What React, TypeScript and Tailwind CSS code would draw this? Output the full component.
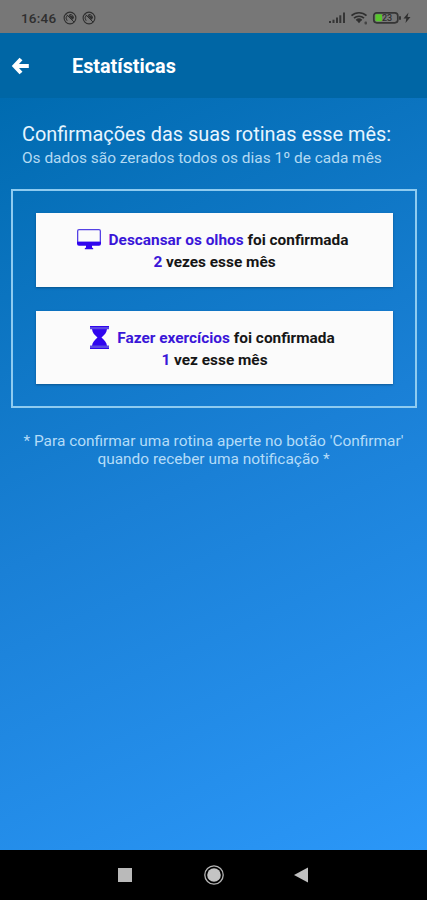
import type { ReactNode } from "react";

function MutedIcon() {
  return (
    <svg width="14" height="14" viewBox="0 0 14 14" fill="none" stroke="#2f2f2f">
      <circle cx="7" cy="7" r="5.900" strokeWidth="1.100" />
      <path d="M4.200 9.800a4 4 0 0 1 .2-5.600M6.500 3.500c2.500-.4 4.300 1.500 4 4" strokeWidth="1" />
      <path d="M6 4.500l3.500 3.800V5.500zM3.500 3.500l7.500 7.500" fill="#2f2f2f" strokeWidth="1" />
    </svg>
  );
}

function StatusBar() {
  return (
    <div className="flex h-[33px] shrink-0 items-start justify-between bg-[#777777] pt-[11px] pr-[15px] pl-[21px] text-[#2f2f2f]">
      <div className="flex items-center">
        <span className="w-[36px] text-[13.500px] leading-[14px] font-medium tracking-[0.2px]">16:46</span>
        <span className="ml-[6px]"><MutedIcon /></span>
        <span className="ml-[5px]"><MutedIcon /></span>
      </div>
      <svg width="83" height="14" viewBox="0 0 83 14" fill="none">
        <g fill="#353535">
          <rect x="0" y="10" width="2" height="2" />
          <rect x="3.500" y="8.700" width="2" height="3.300" />
          <rect x="7" y="6.500" width="2" height="5.500" />
          <rect x="10.300" y="4.300" width="2" height="7.700" />
          <rect x="14" y="1.500" width="2" height="10.500" />
        </g>
        <path d="M22.500 4.700a11 11 0 0 1 15 0M25 7.200a7.400 7.400 0 0 1 10 0M27.300 9.400a4 4 0 0 1 5.400 0" stroke="#2f2f2f" strokeWidth="1.700" />
        <path d="M27.700 9.500L30 12.200l2.300-2.700q-2.300-1.500-4.600 0z" fill="#2f2f2f" />
        <rect x="35.500" y="10.500" width="2.500" height="3" rx="1" fill="#444" />
        <rect x="44.800" y="1.800" width="24" height="10" rx="3" stroke="#353535" strokeWidth="1.700" />
        <rect x="46.500" y="3.300" width="6.500" height="7" rx="1" fill="#58c72d" />
        <rect x="70" y="5" width="2" height="4" rx="1" fill="#353535" />
        <text x="53" y="10.300" fill="#303030" fontSize="9" fontWeight="500">23</text>
        <path d="M79.500 1.500L74.500 7.500h2.800L76.500 12l5-6h-3z" fill="#2f2f2f" />
      </svg>
    </div>
  );
}

function Header() {
  return (
    <header className="flex h-[65px] shrink-0 items-center bg-[#0066a5] pl-[11px] text-white">
      <svg className="w-[18px]" height="18" viewBox="0 0 18 18" fill="none" stroke="white" strokeWidth="4">
        <path d="M10 2L3.500 9l6.500 7M4 9h13.800" />
      </svg>
      <h1 className="ml-[43px] pt-[2px] text-[19.800px] leading-6 font-bold">Estatísticas</h1>
    </header>
  );
}

function MonitorIcon() {
  return (
    <svg width="24" height="22" viewBox="0 0 24 22">
      <path fillRule="evenodd" fill="#5542e4" d="M2 0h20a2 2 0 0 1 2 2v12H0V2a2 2 0 0 1 2-2zm0 1.200q-.7 0-.7.700v10.800h21.400V1.900q0-.7-.7-.7z" />
      <path fill="#3005ee" d="M0 12.700h24v2a2 2 0 0 1-2 2h-7v1.800l1.200.7v1H7.800v-1l1.200-.7v-1.800H2a2 2 0 0 1-2-2z" />
    </svg>
  );
}

function HourglassIcon() {
  return (
    <svg width="19" height="23" viewBox="0 0 19 23" fill="#3005ee">
      <path d="M2 3h15c-.3 3.500-2.500 6-5.500 8.500C14.500 14 16.700 16.500 17 20H2c.3-3.500 2.500-6 5.500-8.500C4.500 9 2.300 6.500 2 3z" />
      <path d="M0 0h19v3.300H0zM0 19.500h19V23H0z" fill="#5b48e5" />
      <path d="M0 0h19v1H0zM0 22h19v1H0z" />
    </svg>
  );
}

function RoutineCard({ icon, name, count, unit }: { icon: ReactNode; name: ReactNode; count: number; unit: string }) {
  return (
    <div className="flex-1 bg-[#fbfbfb] pt-[16px] text-center text-[15.400px] leading-[22px] font-bold text-[#161616] shadow-[0_1px_2px_rgba(0,50,90,0.5)]">
      <div className="flex h-[22px] items-center justify-center pr-[4px] whitespace-nowrap">
        {icon}
        <span className="ml-[8px]"><span className="text-[#3a16d8]">{name}</span> foi confirmada</span>
      </div>
      <div><span className="text-[#3a16d8]">{count}</span> {unit} esse mês</div>
    </div>
  );
}

export default function App() {
  return (
    <div className="flex h-[900px] w-[427px] flex-col overflow-hidden bg-black font-[Roboto,sans-serif]">
      <StatusBar />
      <Header />
      <main className="flex-1 bg-[linear-gradient(155deg,#006bb0_0%,#1a80d6_50%,#2b97f8_100%)] pt-[25px] text-[#d3e9f8]">
        <h2 className="pl-[22px] text-[19.900px] leading-[24px] whitespace-nowrap text-[#e6f5ff]">Confirmações das suas rotinas esse mês:</h2>
        <p className="pl-[22px] text-[15.450px] leading-[23px] whitespace-nowrap text-[#b3daf3]">Os dados são zerados todos os dias 1º de cada mês</p>
        <section className="mt-[19px] mr-[10px] ml-[11px] flex h-[219px] flex-col gap-[24px] border-2 border-[#8ecbf0] pt-[22px] pr-[22px] pb-[22px] pl-[23px]">
          <RoutineCard icon={<MonitorIcon />} name="Descansar os olhos" count={2} unit="vezes" />
          <RoutineCard icon={<HourglassIcon />} name="Fazer exercícios" count={1} unit="vez" />
        </section>
        <p className="mt-[24px] text-center text-[15.450px] leading-[18px] whitespace-nowrap text-[#b4dcf8]">
          * Para confirmar uma rotina aperte no botão 'Confirmar'<br />quando receber uma notificação *
        </p>
      </main>
      <nav className="flex h-[50px] shrink-0 items-center bg-black pl-[118px]">
        <span className="size-[14px] bg-[#bababa]" />
        <svg className="ml-[72px]" width="20" height="20" viewBox="0 0 20 20" fill="none" stroke="#b5b5b5">
          <circle cx="10" cy="10" r="9.200" strokeWidth="1.300" />
          <circle cx="10" cy="10" r="6.800" fill="#c4c4c4" stroke="none" />
        </svg>
        <svg className="ml-[70px]" width="14" height="16" viewBox="0 0 14 16">
          <path d="M0 8L14 .5v15z" fill="#c0c0c0" />
        </svg>
      </nav>
    </div>
  );
}
